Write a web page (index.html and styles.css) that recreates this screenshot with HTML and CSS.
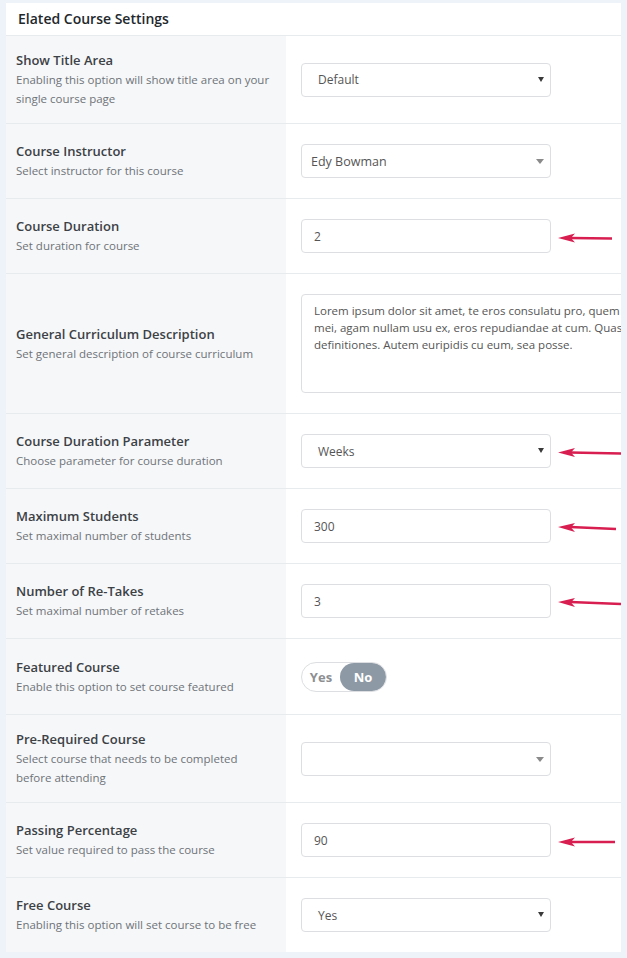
FILE: index.html
```html
<!DOCTYPE html>
<html lang="en">
<head>
  <meta charset="UTF-8">
  <title>Elated Course Settings</title>
  <link rel="stylesheet" href="styles.css">
</head>
<body>
  <div class="panel">
    <div class="panel-title">Elated Course Settings</div>

    <div class="row">
      <div class="label-cell">
        <h4>Show Title Area</h4>
        <p>Enabling this option will show title area on your single course page</p>
      </div>
      <div class="field-cell">
        <div class="select native"><span>Default</span></div>
      </div>
    </div>

    <div class="row">
      <div class="label-cell">
        <h4>Course Instructor</h4>
        <p>Select instructor for this course</p>
      </div>
      <div class="field-cell">
        <div class="select select2"><span>Edy Bowman</span></div>
      </div>
    </div>

    <div class="row">
      <div class="label-cell">
        <h4>Course Duration</h4>
        <p>Set duration for course</p>
      </div>
      <div class="field-cell">
        <input class="text-input" type="text" value="2">
        <svg class="mark" width="56" height="12" viewBox="0 0 56 12"><path d="M12 6 L54 6.5" stroke="#d81e50" stroke-width="2.6" fill="none"/><polygon points="0,6 17,1.5 13,6 17,10.5" fill="#d81e50"/></svg>
      </div>
    </div>

    <div class="row">
      <div class="label-cell">
        <h4>General Curriculum Description</h4>
        <p>Set general description of course curriculum</p>
      </div>
      <div class="field-cell">
        <textarea class="text-area" wrap="off">Lorem ipsum dolor sit amet, te eros consulatu pro, quem labores ad
mei, agam nullam usu ex, eros repudiandae at cum. Quas nostrum
definitiones. Autem euripidis cu eum, sea posse.</textarea>
      </div>
    </div>

    <div class="row">
      <div class="label-cell">
        <h4>Course Duration Parameter</h4>
        <p>Choose parameter for course duration</p>
      </div>
      <div class="field-cell">
        <div class="select native"><span>Weeks</span></div>
        <svg class="mark" width="68" height="12" viewBox="0 0 68 12"><path d="M12 5.5 L67 6.5" stroke="#d81e50" stroke-width="2.6" fill="none"/><polygon points="0,5.5 17,1 13,5.5 17,10" fill="#d81e50"/></svg>
      </div>
    </div>

    <div class="row">
      <div class="label-cell">
        <h4>Maximum Students</h4>
        <p>Set maximal number of students</p>
      </div>
      <div class="field-cell">
        <input class="text-input" type="text" value="300">
        <svg class="mark" width="60" height="12" viewBox="0 0 60 12"><path d="M12 5 L58 7" stroke="#d81e50" stroke-width="2.6" fill="none"/><polygon points="0,5 17,1 13,5.5 17,10" fill="#d81e50"/></svg>
      </div>
    </div>

    <div class="row">
      <div class="label-cell">
        <h4>Number of Re-Takes</h4>
        <p>Set maximal number of retakes</p>
      </div>
      <div class="field-cell">
        <input class="text-input" type="text" value="3">
        <svg class="mark" width="64" height="12" viewBox="0 0 64 12"><path d="M12 5 L63 7" stroke="#d81e50" stroke-width="2.6" fill="none"/><polygon points="0,5 17,1 13,5.5 17,10" fill="#d81e50"/></svg>
      </div>
    </div>

    <div class="row">
      <div class="label-cell">
        <h4>Featured Course</h4>
        <p>Enable this option to set course featured</p>
      </div>
      <div class="field-cell tall">
        <div class="toggle">
          <span class="toggle-yes">Yes</span>
          <span class="toggle-no">No</span>
        </div>
      </div>
    </div>

    <div class="row">
      <div class="label-cell">
        <h4>Pre-Required Course</h4>
        <p>Select course that needs to be completed before attending</p>
      </div>
      <div class="field-cell">
        <div class="select select2"><span></span></div>
      </div>
    </div>

    <div class="row">
      <div class="label-cell">
        <h4>Passing Percentage</h4>
        <p>Set value required to pass the course</p>
      </div>
      <div class="field-cell">
        <input class="text-input" type="text" value="90">
        <svg class="mark" width="58" height="12" viewBox="0 0 58 12"><path d="M12 6 L57 6" stroke="#d81e50" stroke-width="2.6" fill="none"/><polygon points="0,6 17,1.5 13,6 17,10.5" fill="#d81e50"/></svg>
      </div>
    </div>

    <div class="row">
      <div class="label-cell">
        <h4>Free Course</h4>
        <p>Enabling this option will set course to be free</p>
      </div>
      <div class="field-cell">
        <div class="select native"><span>Yes</span></div>
      </div>
    </div>
  </div>
</body>
</html>
```

FILE: styles.css
```css
body {
  font-family: 'Open Sans', 'Liberation Sans', Arial, sans-serif;
  background: #eef2f9;
  margin: 0;
  padding: 3px 6px 6px;
  color: #3c4146;
}
.panel {
  background: #fff;
  overflow: hidden;
}
.panel-title {
  height: 32px;
  line-height: 31px;
  padding: 0 12px;
  font-size: 14px;
  font-weight: 600;
  color: #23282d;
  border-bottom: 1px solid #e8ebee;
}
.row {
  display: flex;
  border-bottom: 1px solid #e8ebee;
}
.row:last-child {
  border-bottom: none;
}
.label-cell {
  width: 280px;
  flex-shrink: 0;
  box-sizing: border-box;
  padding: 15px 12px 15px 10px;
  background: #f6f7f9;
  display: flex;
  flex-direction: column;
  justify-content: center;
}
.label-cell h4 {
  margin: 0;
  font-size: 13px;
  font-weight: 600;
  line-height: 19px;
  color: #3c4146;
}
.label-cell p {
  margin: 0;
  font-size: 11.5px;
  line-height: 19px;
  color: #6e7378;
}
.field-cell {
  flex: 1;
  padding: 20px 15px;
  min-height: 34px;
  display: flex;
  align-items: center;
  gap: 7px;
  min-width: 0;
}
.field-cell.tall {
  min-height: 35px;
}
.text-input,
.select {
  width: 250px;
  height: 34px;
  box-sizing: border-box;
  border: 1px solid #dcdee1;
  border-radius: 4px;
  background: #fff;
  font-family: inherit;
  font-size: 12px;
  color: #555;
  flex-shrink: 0;
}
.text-input {
  padding: 0 12px;
  outline: none;
}
.select {
  position: relative;
  display: flex;
  align-items: center;
  padding: 0 16px;
}
.select.select2 {
  padding-left: 9px;
  font-size: 12.5px;
}
.select::after {
  content: '';
  position: absolute;
  right: 6px;
  top: 50%;
  border-style: solid;
}
.select.native::after {
  border-width: 5px 3px 0;
  border-color: #3a3a3a transparent transparent;
  margin-top: -3px;
}
.select.select2::after {
  border-width: 5px 4px 0;
  border-color: #8a8a8a transparent transparent;
  margin-top: -2px;
}
.text-area {
  width: 420px;
  height: 99px;
  box-sizing: border-box;
  flex-shrink: 0;
  border: 1px solid #dcdee1;
  border-radius: 4px;
  padding: 7px 12px;
  font-family: inherit;
  font-size: 11.5px;
  line-height: 17px;
  color: #555;
  resize: none;
  overflow: hidden;
  outline: none;
}
.mark {
  flex-shrink: 0;
  margin-top: 4px;
}
.toggle {
  display: flex;
  width: 86px;
  height: 30px;
  box-sizing: border-box;
  border: 1px solid #dcdee1;
  border-radius: 15px;
  font-size: 13px;
  font-weight: 700;
  overflow: hidden;
}
.toggle-yes {
  flex: 1;
  display: flex;
  align-items: center;
  justify-content: center;
  color: #8d8f92;
}
.toggle-no {
  width: 46px;
  display: flex;
  align-items: center;
  justify-content: center;
  background: #8e99a6;
  color: #fff;
  border-radius: 15px;
}
```
